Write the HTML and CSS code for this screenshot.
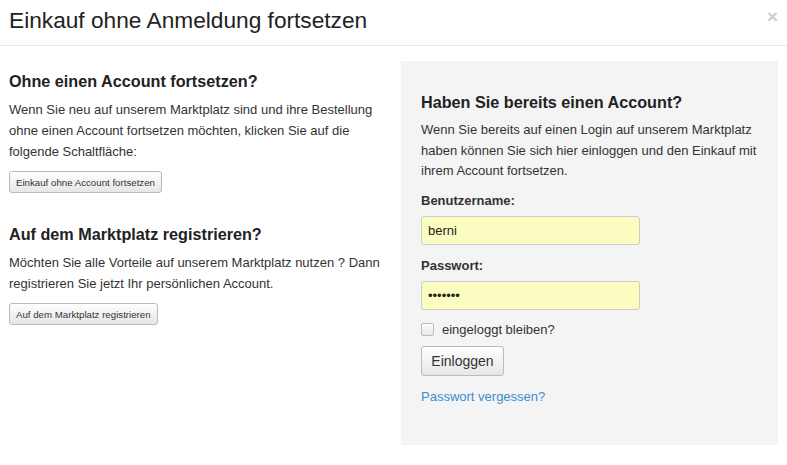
FILE: index.html
```html
<!DOCTYPE html>
<html lang="de">
<head>
<meta charset="UTF-8" />
<title>Einkauf ohne Anmeldung fortsetzen</title>
<link rel="stylesheet" href="styles.css">
</head>
<body>
<div class="modal">
  <div class="modal-header">
    <h2>Einkauf ohne Anmeldung fortsetzen</h2>
    <span class="close">&times;</span>
  </div>
  <div class="modal-body">
    <div class="col-left">
      <h3>Ohne einen Account fortsetzen?</h3>
      <p>Wenn Sie neu auf unserem Marktplatz sind und ihre Bestellung ohne einen Account fortsetzen möchten, klicken Sie auf die folgende Schaltfläche:</p>
      <button class="btn btn-sm">Einkauf ohne Account fortsetzen</button>

      <h3 class="second">Auf dem Marktplatz registrieren?</h3>
      <p>Möchten Sie alle Vorteile auf unserem Marktplatz nutzen ? Dann registrieren Sie jetzt Ihr persönlichen Account.</p>
      <button class="btn btn-sm">Auf dem Marktplatz registrieren</button>
    </div>
    <div class="col-right">
      <h3>Haben Sie bereits einen Account?</h3>
      <p>Wenn Sie bereits auf einen Login auf unserem Marktplatz haben können Sie sich hier einloggen und den Einkauf mit ihrem Account fortsetzen.</p>
      <form class="login">
        <label for="user">Benutzername:</label>
        <input id="user" class="field user" type="text" value="berni">
        <label for="pass">Passwort:</label>
        <input id="pass" class="field" type="password" value="geheim1">
        <div class="remember">
          <span class="box"></span>
          <span>eingeloggt bleiben?</span>
        </div>
        <button type="button" class="btn btn-login">Einloggen</button>
        <a href="#" class="forgot">Passwort vergessen?</a>
      </form>
    </div>
  </div>
</div>
</body>
</html>
```

FILE: styles.css
```css
body {
  margin: 0;
  background: #fff;
  font-family: "Liberation Sans", Arial, sans-serif;
  font-size: 13px;
  color: #333;
}
.modal {
  width: 787px;
}
.modal-header {
  display: flex;
  justify-content: space-between;
  align-items: flex-start;
  height: 46px;
  border-bottom: 1px solid #e8e8e8;
  padding: 0 9px;
  box-sizing: border-box;
}
.modal-header h2 {
  margin: 5px 0 0;
  font-size: 22.7px;
  font-weight: normal;
  line-height: 30px;
  color: #222;
}
.close {
  margin-top: 7px;
  font-size: 19px;
  font-weight: bold;
  color: #cfcfcf;
  line-height: 20px;
}
.modal-body {
  display: flex;
  padding: 15px 9px 0 9px;
}
.col-left {
  width: 382px;
  padding-top: 9px;
  margin-right: 10px;
}
.col-right {
  width: 377px;
  height: 384px;
  box-sizing: border-box;
  background: #f4f4f4;
  padding: 30px 20px 0;
}
h3 {
  margin: 0 0 7px;
  font-size: 16.2px;
  font-weight: bold;
  line-height: 22px;
  color: #222;
}
h3.second {
  margin-top: 30px;
}
p {
  margin: 0 0 9px;
  line-height: 21px;
}
.col-right p {
  line-height: 20.5px;
}
.btn {
  font-family: "Liberation Sans", Arial, sans-serif;
  color: #333;
  border: 1px solid #bbb;
  border-radius: 3px;
  background: linear-gradient(#fff, #e6e6e6);
  cursor: pointer;
}
.btn-sm {
  font-size: 9.7px;
  height: 22px;
  padding: 0 6px;
}
.login {
  display: flex;
  flex-direction: column;
  align-items: flex-start;
  margin-top: 10px;
}
.login label {
  font-weight: bold;
  line-height: 18px;
  margin-bottom: 6px;
}
.field {
  width: 219px;
  height: 29px;
  box-sizing: border-box;
  border: 1px solid #ccc;
  border-radius: 3px;
  background: #fafcc0;
  padding: 0 6px;
  font-family: "Liberation Sans", Arial, sans-serif;
  font-size: 13px;
  color: #222;
  margin-bottom: 11px;
}
.field.user {
  margin-bottom: 12px;
}
.remember {
  display: flex;
  align-items: center;
  gap: 8px;
  height: 18px;
  font-size: 13px;
}
.box {
  width: 11px;
  height: 11px;
  border: 1px solid #bbb;
  border-radius: 2px;
  background: linear-gradient(#fdfdfd, #e8e8e8);
}
.btn-login {
  margin-top: 7px;
  height: 30px;
  width: 83px;
  font-size: 14px;
}
.forgot {
  margin-top: 13px;
  color: #3c8dcf;
  text-decoration: none;
  font-size: 13px;
}
```
